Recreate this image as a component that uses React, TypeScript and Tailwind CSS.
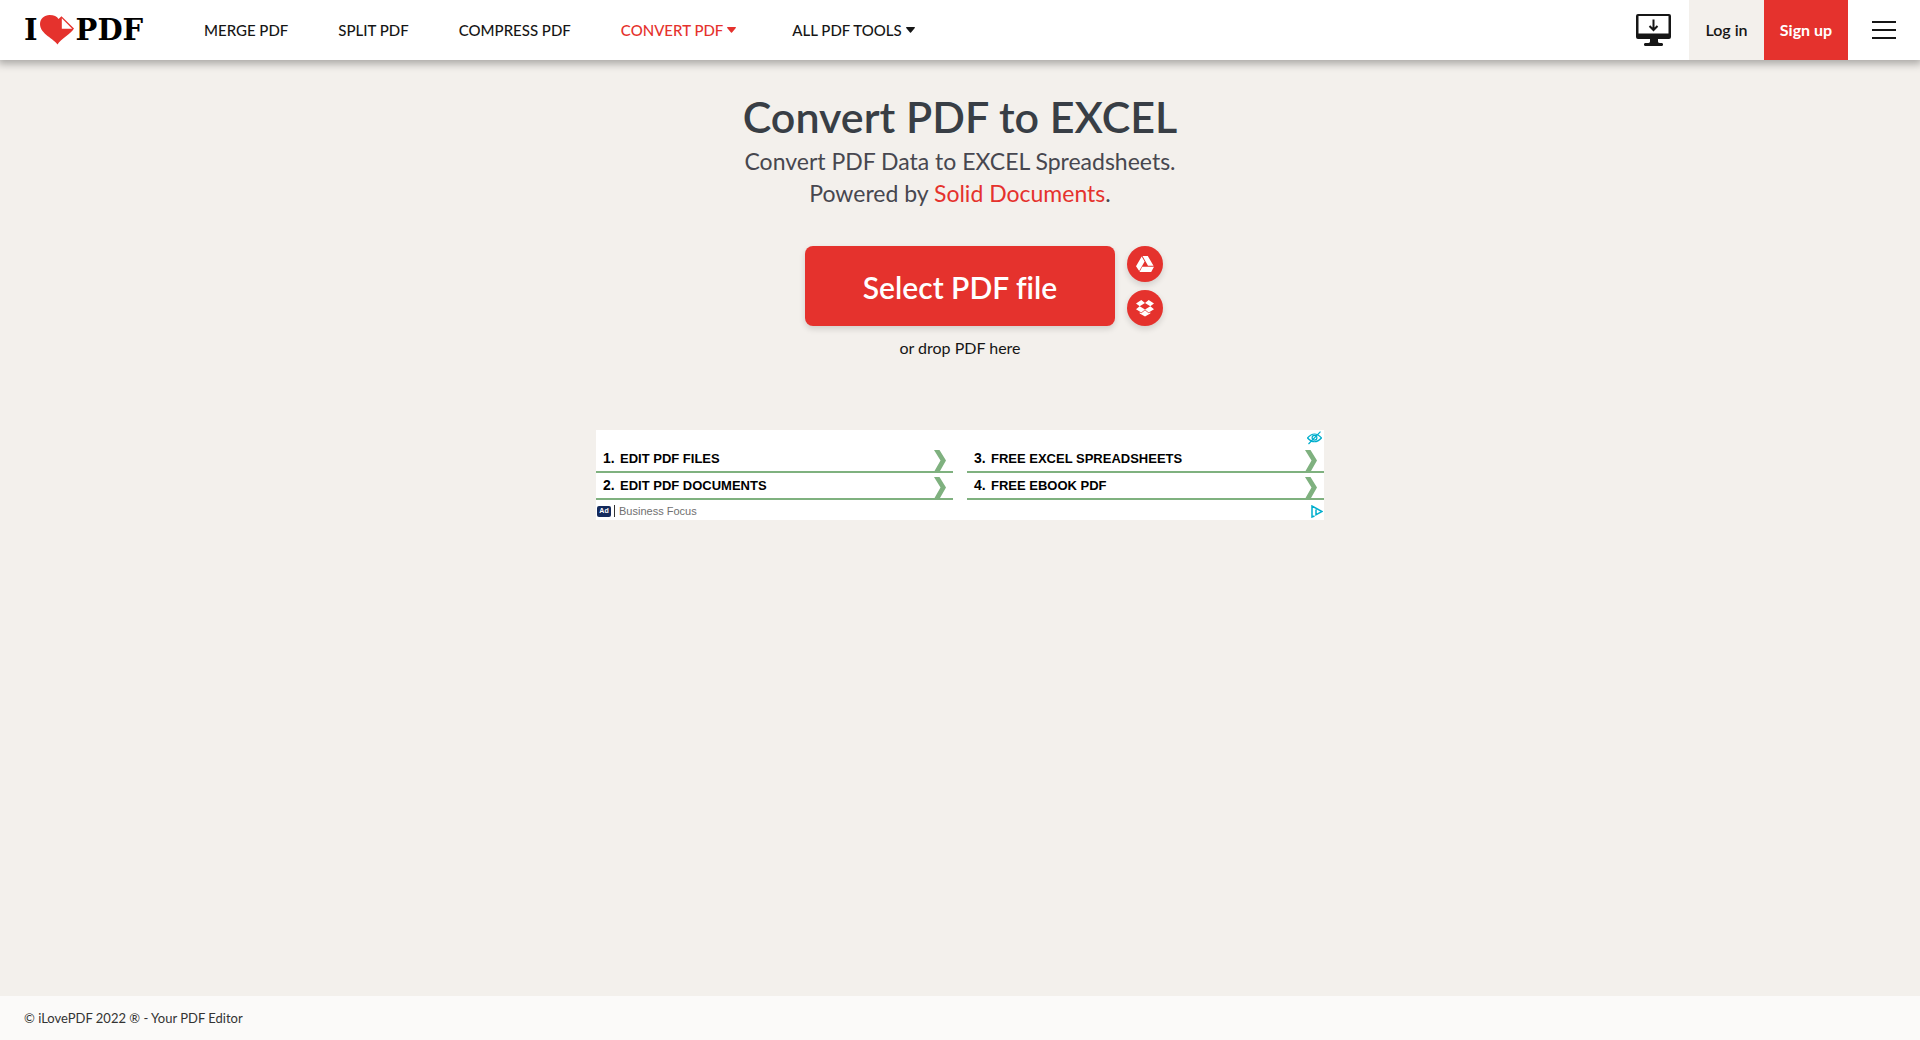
import React from "react";

function Caret() {
  return (
    <svg className="h-[6px] w-[9px]" viewBox="0 0 9 6" fill="currentColor" aria-hidden="true">
      <path d="M.6 0h7.8c.5 0 .7.6.4.9L5 5.5c-.3.3-.7.3-1 0L.2.9C-.1.6.1 0 .6 0Z" />
    </svg>
  );
}

function Logo() {
  return (
    <a href="#" aria-label="I love PDF" className="flex w-[120px] items-center font-['DejaVu_Serif',serif] text-[29px] leading-[60px] font-bold text-black">
      <span>I</span>
      <svg className="mr-[2px] ml-[2px] h-[30px] w-[34px] shrink-0" viewBox="0 0 34 30" aria-hidden="true">
        <path d="M17.500 29.500C14.500 24 0 19 0 9C0 3.500 4.500 0 9.500 0C14 0 17 1.500 18.500 4L21.500 1.200L34 13.500C31 19 20.500 24 17.500 29.500Z" fill="#e5322d" />
        <path d="M21.800 3.300V13.700H32.200Z" fill="#fff" />
      </svg>
      <span>PDF</span>
    </a>
  );
}

function DesktopIcon() {
  return (
    <svg className="h-[32px] w-[35px]" viewBox="0 0 35 32" fill="#161616" aria-hidden="true">
      <path fillRule="evenodd" d="M2 0h31a2 2 0 0 1 2 2v21a2 2 0 0 1-2 2H22v2.500q0 1.500 2 1.500h1a1.300 1.300 0 0 1 1 3H9a1.300 1.300 0 0 1 1-3h1q3 0 3-1.500V25H2a2 2 0 0 1-2-2V2a2 2 0 0 1 2-2Zm.500 2v17.500h30V2Z" />
      <path d="M17.500 5.500v11M13.500 12l4 4 4-4" fill="none" stroke="#161616" strokeWidth="2" />
    </svg>
  );
}

function DriveIcon() {
  return (
    <svg className="h-[16px] w-[18px]" viewBox="0 0 18 16" fill="#fff" aria-hidden="true">
      <path d="M5.700.500 8.600 5.500 3.200 15 0 10.200ZM6.500 0h5.300l5.700 9.700h-5.500ZM6.200 10.700H18L15.200 16H3.500Z" />
    </svg>
  );
}

function DropboxIcon() {
  return (
    <svg className="h-[17px] w-[18px]" viewBox="0 0 18 17" fill="#fff" aria-hidden="true">
      <path d="M5.300 0 9 3 3.700 6.300 0 3.400ZM12.700 0 18 3.400 14.300 6.300 9 3ZM0 9.200 3.700 6.300 9 9.500 5.300 12.600ZM14.300 6.300 18 9.200 12.700 12.600 9 9.500ZM9 10.200l3.700 3 1.600-1v1.200L9 16.600l-5.300-3.200v-1.200l1.600 1Z" />
    </svg>
  );
}

function AdLink({ n, label }: { n: number; label: string }) {
  return (
    <a href="#" className="flex h-[27px] items-center border-b-2 border-[#7fb17f] pr-[7px] pl-[7px] text-black">
      <span className="w-[17px] text-[14px] font-bold">{n}.</span>
      <span className="flex-1 text-[13px] font-bold">{label}</span>
      <svg className="h-[21px] w-[12px] self-end" viewBox="0 0 12 21" fill="#7fb17f" aria-hidden="true">
        <path d="M0 0h5.500L12 10.500 6 21H.500l6-10.500Z" />
      </svg>
    </a>
  );
}

export default function App() {
  return (
    <div className="flex min-h-screen flex-col bg-[#f3f0ec] font-['Lato',sans-serif] text-[#161616] [font-variant-ligatures:none]">
      <header className="relative flex h-[60px] items-center bg-white pl-6 shadow-[0_2px_8px_2px_rgba(0,0,0,0.3)]">
        <Logo />
        <nav className="ml-[60px] flex items-center gap-[50px] text-[15px] leading-5 font-medium whitespace-nowrap">
          <a href="#">MERGE PDF</a>
          <a href="#">SPLIT PDF</a>
          <a href="#">COMPRESS PDF</a>
          <a href="#" className="flex items-center gap-1 text-[#e5322d]">CONVERT PDF <Caret /></a>
          <a href="#" className="ml-[6px] flex items-center gap-1">ALL PDF TOOLS <Caret /></a>
        </nav>
        <div className="ml-auto flex items-center self-stretch text-[16px] font-bold">
          <a href="#" aria-label="Desktop app" className="mr-[18px]"><DesktopIcon /></a>
          <a href="#" className="flex w-[75px] items-center justify-center self-stretch bg-[#f3f0ec] font-semibold">Log in</a>
          <a href="#" className="flex w-[84px] items-center justify-center self-stretch bg-[#e5322d] text-white">Sign up</a>
          <button type="button" aria-label="Menu" className="flex w-[72px] flex-col items-center gap-[6px]">
            <span className="h-[2px] w-6 bg-[#161616]" />
            <span className="h-[2px] w-6 bg-[#161616]" />
            <span className="h-[2px] w-6 bg-[#161616]" />
          </button>
        </div>
      </header>

      <main className="flex flex-1 flex-col items-center pt-8 text-center">
        <h1 className="text-[43px] leading-[50px] font-semibold text-[#383e45]">Convert PDF to EXCEL</h1>
        <p className="mt-[3px] text-[23px] leading-8 text-[#47474f]">
          Convert PDF Data to EXCEL Spreadsheets.
          <br />
          Powered by <a href="#" className="text-[#e5322d]">Solid Documents</a>.
        </p>
        <div className="mt-[37px] ml-12 flex gap-3">
          <button type="button" className="h-20 w-[310px] rounded-lg bg-[#e5322d] pt-[2px] text-[30px] font-semibold text-white shadow-[0_3px_6px_rgba(0,0,0,0.14)]">Select PDF file</button>
          <div className="flex flex-col gap-2">
            <button type="button" aria-label="Google Drive" className="flex size-9 items-center justify-center rounded-full bg-[#e5322d] shadow-[0_3px_6px_rgba(0,0,0,0.14)]"><DriveIcon /></button>
            <button type="button" aria-label="Dropbox" className="flex size-9 items-center justify-center rounded-full bg-[#e5322d] shadow-[0_3px_6px_rgba(0,0,0,0.14)]"><DropboxIcon /></button>
          </div>
        </div>
        <p className="mt-3 text-[16px] leading-5">or drop PDF here</p>

        <aside className="relative mt-[72px] flex h-[90px] w-[728px] max-w-full flex-col bg-white pt-4 text-left font-['Liberation_Sans',sans-serif]">
          <div className="grid grid-cols-2 gap-x-[14px]">
            <AdLink n={1} label="EDIT PDF FILES" />
            <AdLink n={3} label="FREE EXCEL SPREADSHEETS" />
            <AdLink n={2} label="EDIT PDF DOCUMENTS" />
            <AdLink n={4} label="FREE EBOOK PDF" />
          </div>
          <div className="flex flex-1 items-center pt-[2px] pr-[1px] pl-[1px]">
            <span className="flex h-[11px] w-[14px] items-center justify-center rounded-[2px] bg-[#142a5c] text-[7px] font-bold text-white">Ad</span>
            <span className="mr-1 ml-[3px] h-3 w-px bg-[#333333]" />
            <a href="#" className="text-[11px] text-[#707070]">Business Focus</a>
            <svg className="ml-auto h-[13px] w-[12px]" viewBox="0 0 12 13" fill="none" stroke="#00aecd" strokeWidth="1.500" aria-label="AdChoices">
              <path d="M3.500 11 1 12V1l10 5.500-6 3.300V4.500" />
            </svg>
          </div>
          <button type="button" aria-label="Hide ad" className="absolute top-[1px] right-[2px]">
            <svg className="h-[14px] w-[15px]" viewBox="0 0 15 14" fill="none" stroke="#00aecd" strokeWidth="1.200" aria-hidden="true">
              <path d="M.500 7Q7.500-1 14.500 7 7.500 14.500.500 7ZM1.500 13 13.500.700" />
              <circle cx="7.500" cy="6.800" r="2.400" />
            </svg>
          </button>
        </aside>
      </main>

      <footer className="flex h-[44px] items-center bg-[#fbfaf9] px-6 pt-[2px] text-[13px] text-[#333333]">
        © iLovePDF 2022 ® - Your PDF Editor
      </footer>
    </div>
  );
}
